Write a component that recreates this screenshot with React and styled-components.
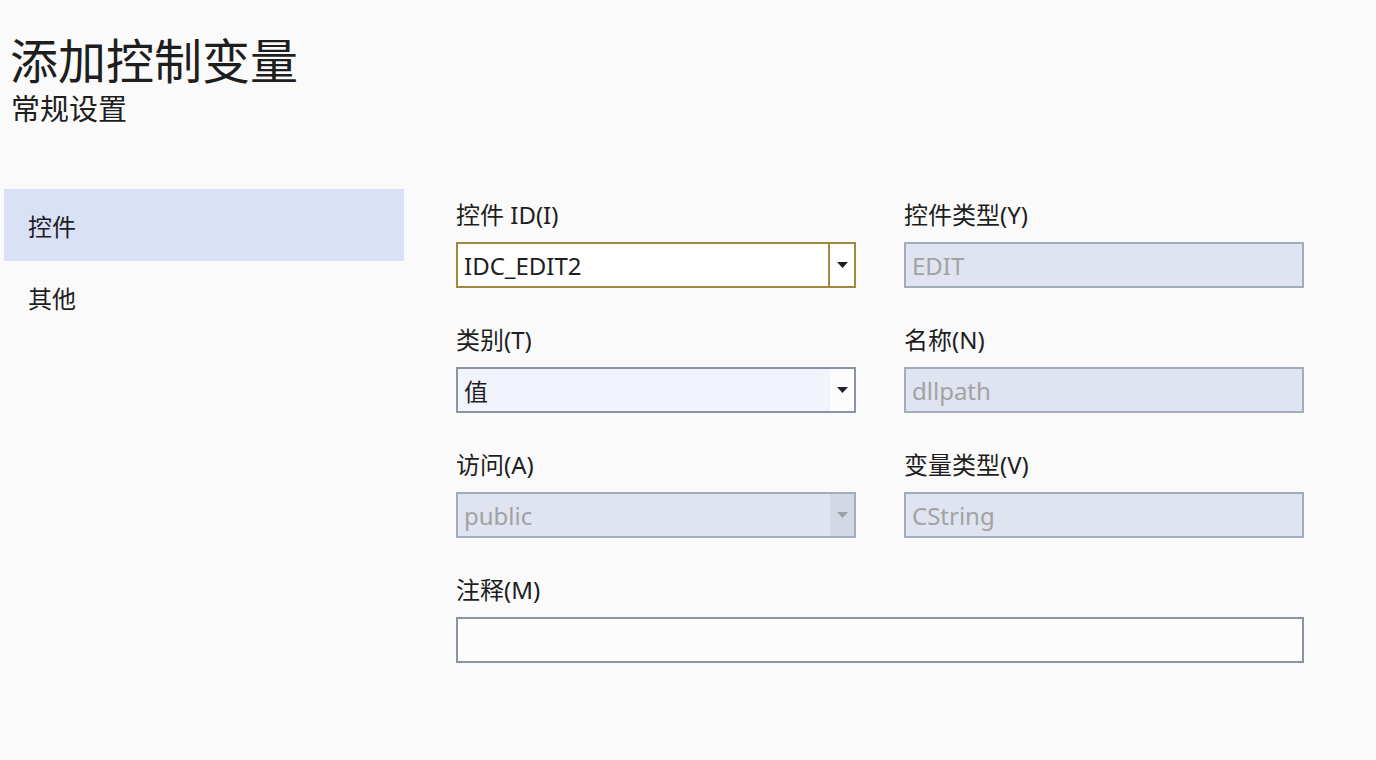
import React from 'react';
import styled, { createGlobalStyle } from 'styled-components';

const GlobalStyle = createGlobalStyle`
  html, body {
    margin: 0;
    padding: 0;
    background: #fafafa;
  }
  body {
    font-family: "Noto Sans", "Noto Sans CJK SC", sans-serif;
    color: #1e1e1e;
  }
`;

const Page = styled.div`
  width: 1376px;
  height: 760px;
  background: #fafafa;
  overflow: hidden;
`;

const Header = styled.header`
  padding: 31px 0 0 10px;
  height: 159px;
  box-sizing: border-box;
`;

const Title = styled.h1`
  margin: 0;
  font-family: "Noto Sans CJK SC", sans-serif;
  font-weight: 400;
  font-size: 48px;
  line-height: 54px;
  color: #1e1e1e;
`;

const Subtitle = styled.h2`
  margin: 2px 0 0 1px;
  font-family: "Noto Sans CJK SC", sans-serif;
  font-weight: 400;
  font-size: 29px;
  line-height: 40px;
  color: #1e1e1e;
`;

const Body = styled.div`
  display: flex;
  padding-left: 4px;
`;

const Nav = styled.ul`
  list-style: none;
  margin: 30px 0 0 0;
  padding: 0;
  width: 400px;
  flex-shrink: 0;
`;

const NavItem = styled.li`
  height: 72px;
  display: flex;
  align-items: center;
  padding-left: 24px;
  font-size: 24px;
  background: ${(p) => (p.$active ? '#dae0f5' : 'transparent')};
`;

const Form = styled.div`
  margin: 41px 0 0 52px;
  display: grid;
  grid-template-columns: 400px 400px;
  column-gap: 48px;
  row-gap: 37px;
`;

const Field = styled.div`
  display: flex;
  flex-direction: column;
  grid-column: ${(p) => (p.$wide ? '1 / span 2' : 'auto')};
`;

const Label = styled.label`
  font-size: 24px;
  line-height: 30px;
  height: 30px;
  margin-bottom: 12px;
  color: #1e1e1e;
`;

const Box = styled.div`
  height: 46px;
  box-sizing: border-box;
  display: flex;
  align-items: stretch;
  border: 2px solid ${(p) => p.$border};
  background: ${(p) => p.$bg};
`;

const Value = styled.div`
  flex: 1;
  display: flex;
  align-items: center;
  padding-left: 6px;
  font-size: 24px;
  color: ${(p) => (p.$disabled ? '#a2a2a2' : '#1e1e1e')};
`;

const Button = styled.div`
  width: 24px;
  display: flex;
  align-items: center;
  justify-content: center;
  background: ${(p) => p.$bg};
  border-left: ${(p) => (p.$divider ? `2px solid ${p.$divider}` : 'none')};
`;

function Arrow({ color }) {
  return (
    <svg width="11" height="6" viewBox="0 0 11 6">
      <path d="M0 0 H11 L5.5 6 Z" fill={color} />
    </svg>
  );
}

const variants = {
  focus: { border: '#a58840', bg: '#ffffff', btn: '#ffffff', divider: '#a58840', arrow: '#1e1e1e' },
  normal: { border: '#8a94a4', bg: '#f1f4fd', btn: '#fcfcfd', arrow: '#1e2230' },
  disabled: { border: '#a3acba', bg: '#dfe4f0', btn: '#d3d9e4', arrow: '#9ba0a8' },
  empty: { border: '#8a94a4', bg: '#fcfcfc' },
};

function Input({ value, variant, combo }) {
  const v = variants[variant];
  return (
    <Box $border={v.border} $bg={v.bg}>
      <Value $disabled={variant === 'disabled'}>{value}</Value>
      {combo && (
        <Button $bg={v.btn} $divider={v.divider}>
          <Arrow color={v.arrow} />
        </Button>
      )}
    </Box>
  );
}

const fields = [
  { label: '控件 ID(I)', value: 'IDC_EDIT2', variant: 'focus', combo: true },
  { label: '控件类型(Y)', value: 'EDIT', variant: 'disabled' },
  { label: '类别(T)', value: '值', variant: 'normal', combo: true },
  { label: '名称(N)', value: 'dllpath', variant: 'disabled' },
  { label: '访问(A)', value: 'public', variant: 'disabled', combo: true },
  { label: '变量类型(V)', value: 'CString', variant: 'disabled' },
  { label: '注释(M)', value: '', variant: 'empty', wide: true },
];

export default function App() {
  return (
    <Page>
      <GlobalStyle />
      <Header>
        <Title>添加控制变量</Title>
        <Subtitle>常规设置</Subtitle>
      </Header>
      <Body>
        <Nav>
          <NavItem $active>控件</NavItem>
          <NavItem>其他</NavItem>
        </Nav>
        <Form>
          {fields.map((f) => (
            <Field key={f.label} $wide={f.wide}>
              <Label>{f.label}</Label>
              <Input value={f.value} variant={f.variant} combo={f.combo} />
            </Field>
          ))}
        </Form>
      </Body>
    </Page>
  );
}
